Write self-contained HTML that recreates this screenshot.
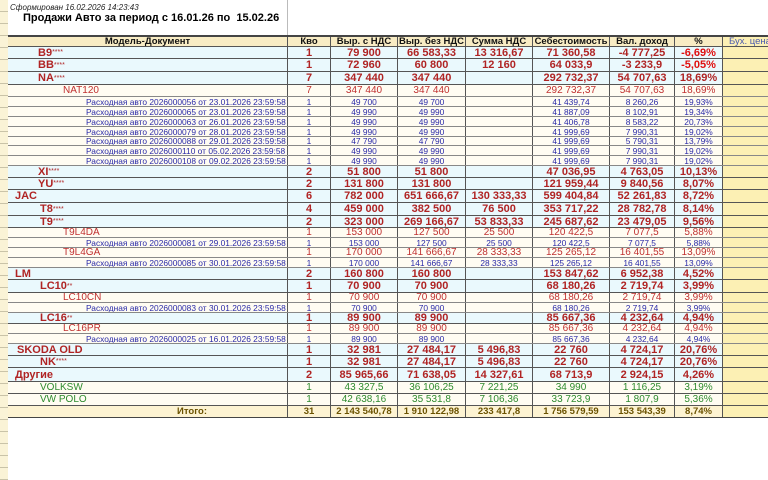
<!DOCTYPE html>
<html><head><meta charset="utf-8"><style>
*{margin:0;padding:0;box-sizing:border-box}
body{width:768px;height:480px;overflow:hidden;background:#fff;font-family:"Liberation Sans",Arial,sans-serif;position:relative}
.strip{position:absolute;left:0;top:0;width:8px;height:480px;background:repeating-linear-gradient(#faf3d6 0 11px,#c9c3a8 11px 12px)}
.gen{position:absolute;left:10px;top:3px;font-size:8px;font-style:italic;color:#222}
.title{position:absolute;left:23px;top:12px;font-size:11px;font-weight:bold;color:#000}
.vl{position:absolute;left:287px;top:0;width:1px;height:35px;background:#bbb}
.r{position:absolute;left:8px;width:830px;display:flex;border-bottom:1px solid #555}
.r>div{flex-shrink:0;border-right:1px solid #555;text-align:center;white-space:nowrap;overflow:hidden;display:flex;align-items:center;justify-content:center;height:100%}
.r>div:nth-child(1){width:280px;justify-content:flex-start}
.r>div:nth-child(2){width:43px}
.r>div:nth-child(3){width:67px}
.r>div:nth-child(4){width:68px}
.r>div:nth-child(5){width:67px}
.r>div:nth-child(6){width:77px}
.r>div:nth-child(7){width:65px}
.r>div:nth-child(8){width:48px}
.r>div:nth-child(9){width:115px;background:#fcf0b4;justify-content:flex-start;padding-left:6px}
.h{background:#f8ecc4;font-weight:bold;font-size:9.5px;color:#111;border-top:2px solid #444}
.h>div:nth-child(1){justify-content:center!important}
.m{background:#eaf9fd;color:#b02424;font-weight:bold;font-size:11px}
.s{background:#fffcf2;color:#c03030;font-size:10px;border-bottom-color:#888}
.d{background:#fffcf2;color:#2a2aa8;font-size:8.4px;border-bottom-color:#888}
.g{background:#fffcf2;color:#2e8b2e;font-size:10px}
.t{background:#fdf3d2;color:#6b5200;font-weight:bold;font-size:9.5px;border-bottom:1px solid #444}
sup{font-size:7px;font-weight:normal;vertical-align:3px}
.neg{color:#e01010}
</style></head><body>
<div class="strip"></div>
<div class="gen">Сформирован 16.02.2026 14:23:43</div>
<div class="title">Продажи Авто за период с 16.01.26 по&nbsp; 15.02.26</div>
<div class="vl"></div>

<div class="r h" style="top:35px;height:12px"><div>Модель-Документ</div><div>Кво</div><div>Выр. с НДС</div><div>Выр. без НДС</div><div>Сумма НДС</div><div>Себестоимость</div><div>Вал. доход</div><div>%</div><div style="color:#4a5ab0;font-weight:normal">Бух. цена</div></div>

<div class="r m" style="top:47px;height:12px"><div style="padding-left:30px">B9<sup>****</sup></div><div>1</div><div>79 900</div><div>66 583,33</div><div>13 316,67</div><div>71 360,58</div><div>-4 777,25</div><div class="neg">-6,69%</div><div></div></div>
<div class="r m" style="top:59px;height:13px"><div style="padding-left:30px">BB<sup>****</sup></div><div>1</div><div>72 960</div><div>60 800</div><div>12 160</div><div>64 033,9</div><div>-3 233,9</div><div class="neg">-5,05%</div><div></div></div>
<div class="r m" style="top:72px;height:13px"><div style="padding-left:30px">NA<sup>****</sup></div><div>7</div><div>347 440</div><div>347 440</div><div></div><div>292 732,37</div><div>54 707,63</div><div>18,69%</div><div></div></div>
<div class="r s" style="top:85px;height:12px"><div style="padding-left:55px">NAT120</div><div>7</div><div>347 440</div><div>347 440</div><div></div><div>292 732,37</div><div>54 707,63</div><div>18,69%</div><div></div></div>
<div class="r d" style="top:97px;height:10px"><div style="padding-left:78px">Расходная авто 2026000056 от 23.01.2026 23:59:58</div><div>1</div><div>49 700</div><div>49 700</div><div></div><div>41 439,74</div><div>8 260,26</div><div>19,93%</div><div></div></div>
<div class="r d" style="top:107px;height:10px"><div style="padding-left:78px">Расходная авто 2026000065 от 23.01.2026 23:59:58</div><div>1</div><div>49 990</div><div>49 990</div><div></div><div>41 887,09</div><div>8 102,91</div><div>19,34%</div><div></div></div>
<div class="r d" style="top:117px;height:10px"><div style="padding-left:78px">Расходная авто 2026000063 от 26.01.2026 23:59:58</div><div>1</div><div>49 990</div><div>49 990</div><div></div><div>41 406,78</div><div>8 583,22</div><div>20,73%</div><div></div></div>
<div class="r d" style="top:127px;height:10px"><div style="padding-left:78px">Расходная авто 2026000079 от 28.01.2026 23:59:58</div><div>1</div><div>49 990</div><div>49 990</div><div></div><div>41 999,69</div><div>7 990,31</div><div>19,02%</div><div></div></div>
<div class="r d" style="top:137px;height:9px"><div style="padding-left:78px">Расходная авто 2026000088 от 29.01.2026 23:59:58</div><div>1</div><div>47 790</div><div>47 790</div><div></div><div>41 999,69</div><div>5 790,31</div><div>13,79%</div><div></div></div>
<div class="r d" style="top:146px;height:10px"><div style="padding-left:78px">Расходная авто 2026000110 от 05.02.2026 23:59:58</div><div>1</div><div>49 990</div><div>49 990</div><div></div><div>41 999,69</div><div>7 990,31</div><div>19,02%</div><div></div></div>
<div class="r d" style="top:156px;height:10px"><div style="padding-left:78px">Расходная авто 2026000108 от 09.02.2026 23:59:58</div><div>1</div><div>49 990</div><div>49 990</div><div></div><div>41 999,69</div><div>7 990,31</div><div>19,02%</div><div></div></div>
<div class="r m" style="top:166px;height:12px"><div style="padding-left:30px">XI<sup>****</sup></div><div>2</div><div>51 800</div><div>51 800</div><div></div><div>47 036,95</div><div>4 763,05</div><div>10,13%</div><div></div></div>
<div class="r m" style="top:178px;height:12px"><div style="padding-left:30px">YU<sup>****</sup></div><div>2</div><div>131 800</div><div>131 800</div><div></div><div>121 959,44</div><div>9 840,56</div><div>8,07%</div><div></div></div>
<div class="r m" style="top:190px;height:13px"><div style="padding-left:7px">JAC</div><div>6</div><div>782 000</div><div>651 666,67</div><div>130 333,33</div><div>599 404,84</div><div>52 261,83</div><div>8,72%</div><div></div></div>
<div class="r m" style="top:203px;height:13px"><div style="padding-left:32px">T8<sup>****</sup></div><div>4</div><div>459 000</div><div>382 500</div><div>76 500</div><div>353 717,22</div><div>28 782,78</div><div>8,14%</div><div></div></div>
<div class="r m" style="top:216px;height:12px"><div style="padding-left:32px">T9<sup>****</sup></div><div>2</div><div>323 000</div><div>269 166,67</div><div>53 833,33</div><div>245 687,62</div><div>23 479,05</div><div>9,56%</div><div></div></div>
<div class="r s" style="top:228px;height:10px"><div style="padding-left:55px">T9L4DA</div><div>1</div><div>153 000</div><div>127 500</div><div>25 500</div><div>120 422,5</div><div>7 077,5</div><div>5,88%</div><div></div></div>
<div class="r d" style="top:238px;height:10px"><div style="padding-left:78px">Расходная авто 2026000081 от 29.01.2026 23:59:58</div><div>1</div><div>153 000</div><div>127 500</div><div>25 500</div><div>120 422,5</div><div>7 077,5</div><div>5,88%</div><div></div></div>
<div class="r s" style="top:248px;height:10px"><div style="padding-left:55px">T9L4GA</div><div>1</div><div>170 000</div><div>141 666,67</div><div>28 333,33</div><div>125 265,12</div><div>16 401,55</div><div>13,09%</div><div></div></div>
<div class="r d" style="top:258px;height:10px"><div style="padding-left:78px">Расходная авто 2026000085 от 30.01.2026 23:59:58</div><div>1</div><div>170 000</div><div>141 666,67</div><div>28 333,33</div><div>125 265,12</div><div>16 401,55</div><div>13,09%</div><div></div></div>
<div class="r m" style="top:268px;height:12px"><div style="padding-left:7px">LM</div><div>2</div><div>160 800</div><div>160 800</div><div></div><div>153 847,62</div><div>6 952,38</div><div>4,52%</div><div></div></div>
<div class="r m" style="top:280px;height:13px"><div style="padding-left:32px">LC10<sup>**</sup></div><div>1</div><div>70 900</div><div>70 900</div><div></div><div>68 180,26</div><div>2 719,74</div><div>3,99%</div><div></div></div>
<div class="r s" style="top:293px;height:10px"><div style="padding-left:55px">LC10CN</div><div>1</div><div>70 900</div><div>70 900</div><div></div><div>68 180,26</div><div>2 719,74</div><div>3,99%</div><div></div></div>
<div class="r d" style="top:303px;height:10px"><div style="padding-left:78px">Расходная авто 2026000083 от 30.01.2026 23:59:58</div><div>1</div><div>70 900</div><div>70 900</div><div></div><div>68 180,26</div><div>2 719,74</div><div>3,99%</div><div></div></div>
<div class="r m" style="top:313px;height:11px"><div style="padding-left:32px">LC16<sup>**</sup></div><div>1</div><div>89 900</div><div>89 900</div><div></div><div>85 667,36</div><div>4 232,64</div><div>4,94%</div><div></div></div>
<div class="r s" style="top:324px;height:10px"><div style="padding-left:55px">LC16PR</div><div>1</div><div>89 900</div><div>89 900</div><div></div><div>85 667,36</div><div>4 232,64</div><div>4,94%</div><div></div></div>
<div class="r d" style="top:334px;height:10px"><div style="padding-left:78px">Расходная авто 2026000025 от 16.01.2026 23:59:58</div><div>1</div><div>89 900</div><div>89 900</div><div></div><div>85 667,36</div><div>4 232,64</div><div>4,94%</div><div></div></div>
<div class="r m" style="top:344px;height:12px"><div style="padding-left:9px">SKODA OLD</div><div>1</div><div>32 981</div><div>27 484,17</div><div>5 496,83</div><div>22 760</div><div>4 724,17</div><div>20,76%</div><div></div></div>
<div class="r m" style="top:356px;height:12px"><div style="padding-left:32px">NK<sup>****</sup></div><div>1</div><div>32 981</div><div>27 484,17</div><div>5 496,83</div><div>22 760</div><div>4 724,17</div><div>20,76%</div><div></div></div>
<div class="r m" style="top:368px;height:14px"><div style="padding-left:7px">Другие</div><div>2</div><div>85 965,66</div><div>71 638,05</div><div>14 327,61</div><div>68 713,9</div><div>2 924,15</div><div>4,26%</div><div></div></div>
<div class="r g" style="top:382px;height:12px"><div style="padding-left:32px">VOLKSW</div><div>1</div><div>43 327,5</div><div>36 106,25</div><div>7 221,25</div><div>34 990</div><div>1 116,25</div><div>3,19%</div><div></div></div>
<div class="r g" style="top:394px;height:12px"><div style="padding-left:32px">VW POLO</div><div>1</div><div>42 638,16</div><div>35 531,8</div><div>7 106,36</div><div>33 723,9</div><div>1 807,9</div><div>5,36%</div><div></div></div>
<div class="r t" style="top:406px;height:12px"><div style="justify-content:flex-end;padding-right:80px">Итого:</div><div>31</div><div>2 143 540,78</div><div>1 910 122,98</div><div>233 417,8</div><div>1 756 579,59</div><div>153 543,39</div><div>8,74%</div><div></div></div>
</body></html>
